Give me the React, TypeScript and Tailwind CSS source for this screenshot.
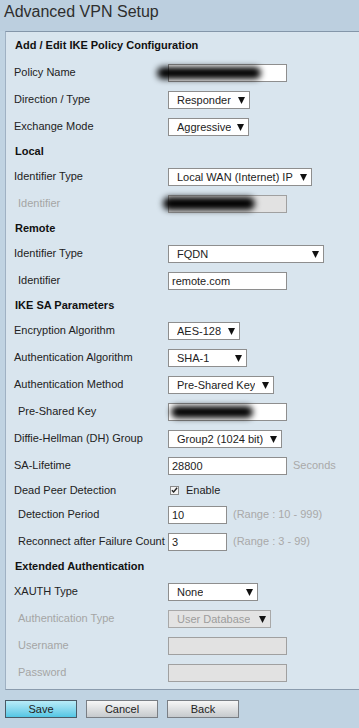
import type { ReactNode } from 'react';
import clsx from 'clsx';

const Label = ({
  children,
  indent,
  disabled,
}: {
  children: ReactNode;
  indent?: boolean;
  disabled?: boolean;
}) => (
  <div
    className={clsx(
      'w-[162px] shrink-0 whitespace-nowrap',
      indent ? 'pl-[12px]' : 'pl-[8px]',
      disabled ? 'text-[#a5a5a5]' : 'text-[#222]'
    )}
  >
    {children}
  </div>
);

const Row = ({ children, className }: { children: ReactNode; className?: string }) => (
  <div className={clsx('flex items-center', className ?? 'h-[27px]')}>{children}</div>
);

const Section = ({ children, first }: { children: ReactNode; first?: boolean }) => (
  <div
    className={clsx(
      'flex items-center pl-[9px] font-bold text-[#111]',
      first ? 'h-[27px]' : 'h-[23px]'
    )}
  >
    {children}
  </div>
);

const Arrow = () => (
  <svg width="7" height="8" viewBox="0 0 7 8" className="ml-[6px] shrink-0">
    <path d="M0 1h7L3.5 8z" fill="#111" />
  </svg>
);

const Select = ({
  value,
  className,
  disabled,
}: {
  value: string;
  className: string;
  disabled?: boolean;
}) => (
  <div
    className={clsx(
      'flex h-[18px] items-center justify-between border pl-[8px] pr-[4px] leading-[16px] whitespace-nowrap',
      disabled
        ? 'border-[#a8a8a8] bg-[#e3e3e3] text-[#9d9d9d]'
        : 'border-[#8e8e8e] bg-white text-[#222]',
      className
    )}
  >
    <span className="overflow-hidden">{value}</span>
    <Arrow />
  </div>
);

const Input = ({
  value,
  className,
  disabled,
  blob,
}: {
  value?: string;
  className?: string;
  disabled?: boolean;
  blob?: 'policy' | 'local' | 'psk';
}) => (
  <div
    className={clsx(
      'relative h-[18px] border pl-[3px] leading-[16px]',
      disabled ? 'border-[#a0a0a0] bg-[#e2e2e2]' : 'border-[#8e8e8e] bg-white',
      'text-[#222]',
      className ?? 'w-[119px]'
    )}
  >
    {value}
    {blob === 'policy' && (
      <div className="absolute -left-[12px] top-[2px] h-[12px] w-[104px] rounded-full bg-black blur-[3px]" />
    )}
    {blob === 'local' && (
      <div className="absolute -left-[6px] top-[1px] h-[13px] w-[92px] rounded-full bg-black blur-[3px]" />
    )}
    {blob === 'psk' && (
      <div className="absolute left-[2px] top-[2px] h-[12px] w-[82px] rounded-full bg-black blur-[3px]" />
    )}
  </div>
);

const Hint = ({ children }: { children: ReactNode }) => (
  <span className="ml-[6px] whitespace-nowrap text-[#a9a9a9]">{children}</span>
);

const Checkbox = () => (
  <div className="ml-[2px] flex h-[9px] w-[9px] items-center justify-center border border-[#8a8a8a] bg-[#f4f4f4]">
    <svg width="8" height="8" viewBox="0 0 8 8">
      <path d="M1 4.2l2 2L7 1.5" fill="none" stroke="#222" strokeWidth="1.6" />
    </svg>
  </div>
);

const Button = ({ children, primary }: { children: ReactNode; primary?: boolean }) => (
  <div
    className={clsx(
      'flex h-[18px] w-[72px] items-center justify-center border text-[#222]',
      primary
        ? 'border-[#4a5a66] bg-gradient-to-b from-[#b8ecf8] to-[#52c6e4]'
        : 'border-[#7a7f85] bg-gradient-to-b from-[#f7f7f7] to-[#c6cacd]'
    )}
  >
    {children}
  </div>
);

export default function App() {
  return (
    <div className="min-h-[728px] w-[359px] overflow-hidden bg-[#c0d3e2] font-['Liberation_Sans',Arial,sans-serif] text-[11px]">
      <div className="h-[31px] bg-[#bccfdf] pl-[4px] pt-[2px] text-[16px] leading-[19px] text-[#2e2e2e]">
        Advanced VPN Setup
      </div>
      <div className="ml-[5px] border-y border-l border-t-[#8496a9] border-b-[#8a9bad] border-l-[#9fb1c3] bg-[#d9e5ee] pb-[3px]">
        <Section first>Add / Edit IKE Policy Configuration</Section>
        <Row>
          <Label>Policy Name</Label>
          <Input blob="policy" />
        </Row>
        <Row>
          <Label>Direction / Type</Label>
          <Select value="Responder" className="w-[82px]" />
        </Row>
        <Row>
          <Label>Exchange Mode</Label>
          <Select value="Aggressive" className="w-[81px]" />
        </Row>

        <Section>Local</Section>
        <Row>
          <Label>Identifier Type</Label>
          <Select value="Local WAN (Internet) IP" className="w-[144px]" />
        </Row>
        <Row>
          <Label indent disabled>
            Identifier
          </Label>
          <Input disabled blob="local" />
        </Row>

        <Section>Remote</Section>
        <Row>
          <Label>Identifier Type</Label>
          <Select value="FQDN" className="w-[156px]" />
        </Row>
        <Row>
          <Label indent>Identifier</Label>
          <Input value="remote.com" />
        </Row>

        <Section>IKE SA Parameters</Section>
        <Row>
          <Label>Encryption Algorithm</Label>
          <Select value="AES-128" className="w-[72px]" />
        </Row>
        <Row>
          <Label>Authentication Algorithm</Label>
          <Select value="SHA-1" className="w-[79px]" />
        </Row>
        <Row>
          <Label>Authentication Method</Label>
          <Select value="Pre-Shared Key" className="w-[106px]" />
        </Row>
        <Row>
          <Label indent>Pre-Shared Key</Label>
          <Input blob="psk" />
        </Row>
        <Row>
          <Label>Diffie-Hellman (DH) Group</Label>
          <Select value="Group2 (1024 bit)" className="w-[114px]" />
        </Row>
        <Row>
          <Label>SA-Lifetime</Label>
          <Input value="28800" />
          <Hint>Seconds</Hint>
        </Row>
        <Row className="h-[22px]">
          <Label>Dead Peer Detection</Label>
          <Checkbox />
          <span className="ml-[7px] text-[#222]">Enable</span>
        </Row>
        <Row>
          <Label indent>Detection Period</Label>
          <Input value="10" className="w-[59px]" />
          <Hint>(Range : 10 - 999)</Hint>
        </Row>
        <Row>
          <Label indent>Reconnect after Failure Count</Label>
          <Input value="3" className="w-[59px]" />
          <Hint>(Range : 3 - 99)</Hint>
        </Row>

        <Section>Extended Authentication</Section>
        <Row>
          <Label>XAUTH Type</Label>
          <Select value="None" className="w-[90px]" />
        </Row>
        <Row>
          <Label indent disabled>
            Authentication Type
          </Label>
          <Select value="User Database" className="w-[103px]" disabled />
        </Row>
        <Row>
          <Label indent disabled>
            Username
          </Label>
          <Input disabled />
        </Row>
        <Row>
          <Label indent disabled>
            Password
          </Label>
          <Input disabled />
        </Row>
      </div>
      <div className="flex gap-[9px] pl-[5px] pt-[10px]">
        <Button primary>Save</Button>
        <Button>Cancel</Button>
        <Button>Back</Button>
      </div>
    </div>
  );
}
